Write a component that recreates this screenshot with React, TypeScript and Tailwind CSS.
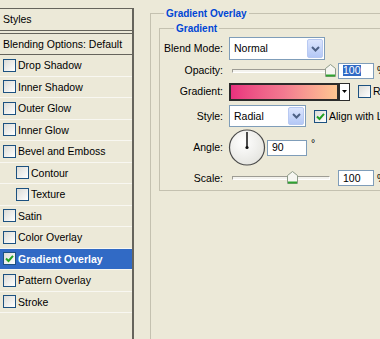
import React from "react";

function Check({ checked = false, className = "" }: { checked?: boolean; className?: string }) {
  return (
    <span
      className={`flex h-[13px] w-[13px] shrink-0 items-center justify-center border border-[#1c5180] bg-linear-to-br from-[#dcdcd7] to-white ${className}`}
    >
      {checked && (
        <svg width="9" height="9" viewBox="0 0 9 9">
          <path d="M1 4.5 L3.5 7 L8 1.8" stroke="#21a121" strokeWidth="2" fill="none" />
        </svg>
      )}
    </span>
  );
}

function StyleRow({ label, indent, checked, active }: { label: string; indent?: boolean; checked?: boolean; active?: boolean }) {
  return (
    <div
      className={`flex h-[21.5px] items-center border-b border-[#f8f7f1] ${indent ? "pl-[16px]" : "pl-[3px]"} ${
        active ? "bg-[#316ac5] font-bold text-white" : ""
      }`}
    >
      <Check checked={checked} />
      <span className="ml-[2px]">{label}</span>
    </div>
  );
}

function Combo({ value, w, h }: { value: string; w: string; h: string }) {
  return (
    <div className={`flex items-center border border-[#7f9db9] bg-white pl-[4px] ${w} ${h}`}>
      <span>{value}</span>
      <span className="m-[1px] ml-auto flex h-[calc(100%-2px)] w-[16px] items-center justify-center rounded-[2px] border border-[#b8c9f2] bg-linear-to-b from-[#dce5fd] to-[#b4c8f6]">
        <svg width="9" height="6" viewBox="0 0 9 6">
          <path d="M1 1 L4.5 4.5 L8 1" stroke="#4d6185" strokeWidth="2" fill="none" />
        </svg>
      </span>
    </div>
  );
}

function Thumb() {
  return (
    <svg width="11" height="13" viewBox="0 0 11 13">
      <path d="M0.5 4.5 L5.5 0.5 L10.5 4.5 V12.5 H0.5 Z" fill="#f6f6f1" stroke="#8d9a88" />
      <path d="M1 11.5 H10" stroke="#2fa32f" strokeWidth="2" />
    </svg>
  );
}

function Slider({ thumb }: { thumb: string }) {
  return (
    <div className="relative flex h-[16px] w-[106px] items-center">
      <div className="ml-[3px] h-[4px] w-[98px] border border-[#9d9c94] border-b-white border-r-white bg-[#f4f3ee]" />
      <div className={`absolute top-[1px] ${thumb}`}>
        <Thumb />
      </div>
    </div>
  );
}

function Field({ value, w, selected }: { value: string; w: string; selected?: boolean }) {
  return (
    <div className={`flex h-[16px] items-center border border-[#7f9db9] bg-white pl-[4px] ${w}`}>
      <span className={selected ? "bg-[#316ac5] text-white" : ""}>{value}</span>
    </div>
  );
}

function Row({ label, className, children }: { label: string; className: string; children: React.ReactNode }) {
  return (
    <div className={`flex items-center ${className}`}>
      <span className="w-[63px] text-right">{label}</span>
      <div className="ml-[6px] flex items-center">{children}</div>
    </div>
  );
}

export default function App() {
  return (
    <div className="flex h-[339px] w-[380px] overflow-hidden bg-[#ece9d8] font-['Liberation_Sans',Arial,sans-serif] text-[10.5px] leading-none text-black">
      {/* Styles list */}
      <div className="mt-[8px] w-[134px] shrink-0 border-t border-r-2 border-[#66645c]">
        <div className="flex h-[22px] items-center border-b border-[#66645c] pl-[3px]">Styles</div>
        <div className="mt-[2px] flex h-[22px] items-center border-y border-[#66645c] pl-[3px]">Blending Options: Default</div>
        <StyleRow label="Drop Shadow" />
        <StyleRow label="Inner Shadow" />
        <StyleRow label="Outer Glow" />
        <StyleRow label="Inner Glow" />
        <StyleRow label="Bevel and Emboss" />
        <StyleRow label="Contour" indent />
        <StyleRow label="Texture" indent />
        <StyleRow label="Satin" />
        <StyleRow label="Color Overlay" />
        <StyleRow label="Gradient Overlay" checked active />
        <StyleRow label="Pattern Overlay" />
        <StyleRow label="Stroke" />
      </div>

      {/* Gradient Overlay settings */}
      <fieldset className="ml-[16px] mt-[7px] h-[400px] w-[420px] shrink-0 border border-[#c4c1b0] p-0">
        <legend className="ml-[13px] px-[2px] text-[10px] font-bold leading-[13px] text-[#0046d5]">Gradient Overlay</legend>
        <div className="pl-[8px]">
          <fieldset className="mt-[2px] w-[400px] border border-[#c4c1b0] p-0">
            <legend className="ml-[14px] px-[2px] text-[10px] font-bold leading-[13px] text-[#0046d5]">Gradient</legend>
            <div className="flex flex-col pb-[4px] pt-[2px]">
              <Row label="Blend Mode:" className="h-[23px]">
                <Combo value="Normal" w="w-[96px]" h="h-[23px]" />
              </Row>
              <Row label="Opacity:" className="mt-[1px] h-[19px]">
                <Slider thumb="left-[96px]" />
                <div className="ml-[3px]">
                  <Field value="100" w="w-[36px]" selected />
                </div>
                <span className="ml-[3px]">%</span>
              </Row>
              <Row label="Gradient:" className="mt-[1px] h-[21px]">
                <div className="h-[18px] w-[110px] border-2 border-[#2b2b2b] bg-linear-to-r from-[#e8307e] via-[#f27a90] to-[#fdc691]" />
                <div className="flex h-[18px] w-[11px] items-center justify-center border border-[#2b2b2b] bg-white">
                  <svg width="5" height="3" viewBox="0 0 5 3">
                    <path d="M0 0 H5 L2.5 3 Z" fill="#000" />
                  </svg>
                </div>
                <Check className="ml-[8px]" />
                <span className="ml-[2px]">Reverse</span>
              </Row>
              <Row label="Style:" className="mt-[3px] h-[22px]">
                <Combo value="Radial" w="w-[77px]" h="h-[22px]" />
                <Check checked className="ml-[8px]" />
                <span className="ml-[2px]">Align with Layer</span>
              </Row>
              <Row label="Angle:" className="mt-[2px] h-[37px]">
                <svg width="38" height="37" viewBox="0 0 38 37" className="-ml-[1px]">
                  <defs>
                    <radialGradient id="dial" cx="0.4" cy="0.35" r="0.7">
                      <stop offset="0" stopColor="#ffffff" />
                      <stop offset="1" stopColor="#e4e4df" />
                    </radialGradient>
                  </defs>
                  <circle cx="19" cy="18.5" r="17.5" fill="url(#dial)" stroke="#4a4a4a" strokeWidth="1.2" />
                  <line x1="19" y1="18.5" x2="19" y2="3" stroke="#111" strokeWidth="1.5" />
                  <circle cx="19" cy="18.5" r="1.6" fill="#111" />
                </svg>
                <div className="ml-[1px]">
                  <Field value="90" w="w-[40px]" />
                </div>
                <span className="-mt-[8px] ml-[4px]">°</span>
              </Row>
              <Row label="Scale:" className="mt-[4px] h-[16px]">
                <Slider thumb="left-[58px]" />
                <div className="ml-[3px]">
                  <Field value="100" w="w-[36px]" />
                </div>
                <span className="ml-[3px]">%</span>
              </Row>
            </div>
          </fieldset>
        </div>
      </fieldset>
    </div>
  );
}
